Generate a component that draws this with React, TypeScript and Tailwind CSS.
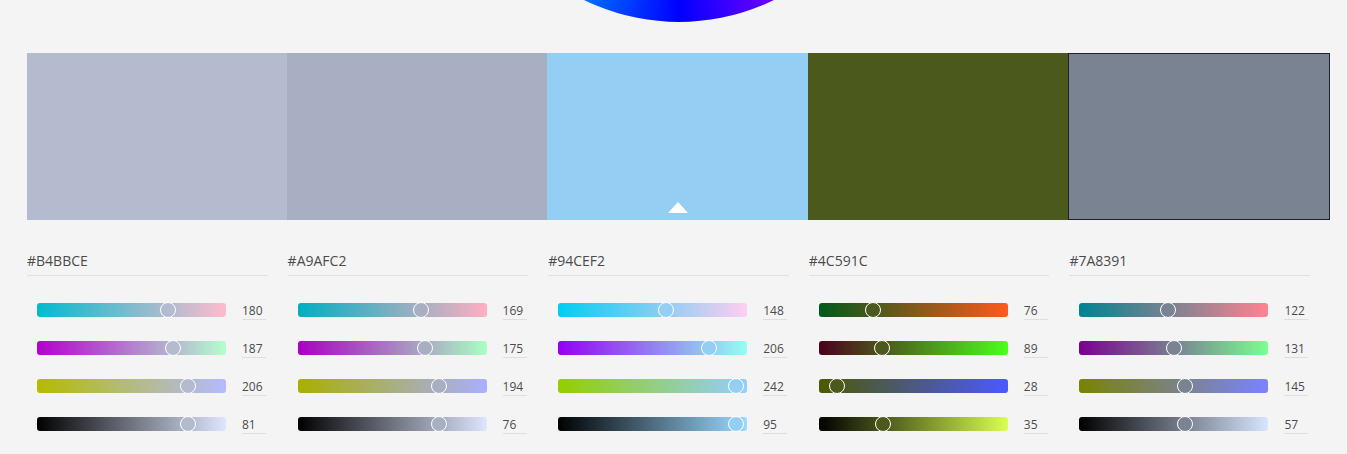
import React from 'react';

type Swatch = { hex: string; r: number; g: number; b: number; v: number };

const swatches: Swatch[] = [
  { hex: 'B4BBCE', r: 180, g: 187, b: 206, v: 81 },
  { hex: 'A9AFC2', r: 169, g: 175, b: 194, v: 76 },
  { hex: '94CEF2', r: 148, g: 206, b: 242, v: 95 },
  { hex: '4C591C', r: 76, g: 89, b: 28, v: 35 },
  { hex: '7A8391', r: 122, g: 131, b: 145, v: 57 },
];

const rgb = (r: number, g: number, b: number) => `rgb(${Math.round(r)},${Math.round(g)},${Math.round(b)})`;

function Slider({ from, to, frac, knob, value }: { from: string; to: string; frac: number; knob: string; value: number }) {
  return (
    <div className="flex items-center h-[38px]">
      <div className="relative w-[189px] h-[14px] rounded-[3px] ml-[10px]" style={{ background: `linear-gradient(to right, ${from}, ${to})` }}>
        <div
          className="absolute top-1/2 w-[16px] h-[16px] -mt-[8px] -ml-[8px] rounded-full border-[1.5px] border-white"
          style={{ left: frac * 189.5 - 2.5, background: knob }}
        />
      </div>
      <div className="ml-[16px] w-[24px] pt-[3px] border-b border-[#dedede] text-[12px] leading-[16px] text-[#4b4b4b]">{value}</div>
    </div>
  );
}

function Column({ s }: { s: Swatch }) {
  const max = Math.max(s.r, s.g, s.b) || 1;
  const k = 255 / max;
  const knob = `#${s.hex}`;
  return (
    <div className="flex-1 pr-[20px]">
      <div className="h-[34px] border-b border-[#e0e0e0] flex items-end pb-[4px] text-[14px] text-[#4b4b4b]">#{s.hex}</div>
      <div className="pt-[15px]">
        <Slider from={rgb(0, s.g, s.b)} to={rgb(255, s.g, s.b)} frac={s.r / 255} knob={knob} value={s.r} />
        <Slider from={rgb(s.r, 0, s.b)} to={rgb(s.r, 255, s.b)} frac={s.g / 255} knob={knob} value={s.g} />
        <Slider from={rgb(s.r, s.g, 0)} to={rgb(s.r, s.g, 255)} frac={s.b / 255} knob={knob} value={s.b} />
        <Slider from="rgb(0,0,0)" to={rgb(s.r * k, s.g * k, s.b * k)} frac={s.v / 100} knob={knob} value={s.v} />
      </div>
    </div>
  );
}

export default function App() {
  return (
    <div className="w-[1347px] h-[454px] overflow-hidden bg-[#f4f4f4] pl-[27px] pr-[17px]" style={{ fontFamily: '"Open Sans", "Noto Sans", sans-serif' }}>
      {/* colour wheel, scrolled mostly off the top */}
      <div
        className="w-[432px] h-[432px] mt-[-410px] mx-auto rounded-full"
        style={{ background: 'conic-gradient(from 180deg, #0000ff, #00ffff, #00ff00, #ffff00, #ff0000, #ff00ff, #0000ff)' }}
      />

      {/* swatches */}
      <div className="flex h-[167px] mt-[31px]">
        {swatches.map((s, i) => (
          <div
            key={s.hex}
            className={`flex-1 flex items-end justify-center pb-[7px] ${i === 4 ? 'border border-[#1c2230]' : ''}`}
            style={{ background: `#${s.hex}` }}
          >
            {i === 2 && (
              <div className="w-0 h-0 border-l-[10px] border-r-[10px] border-b-[11px] border-l-transparent border-r-transparent border-b-white" />
            )}
          </div>
        ))}
      </div>

      {/* editors */}
      <div className="flex mt-[22px]">
        {swatches.map((s) => (
          <Column key={s.hex} s={s} />
        ))}
      </div>
    </div>
  );
}
